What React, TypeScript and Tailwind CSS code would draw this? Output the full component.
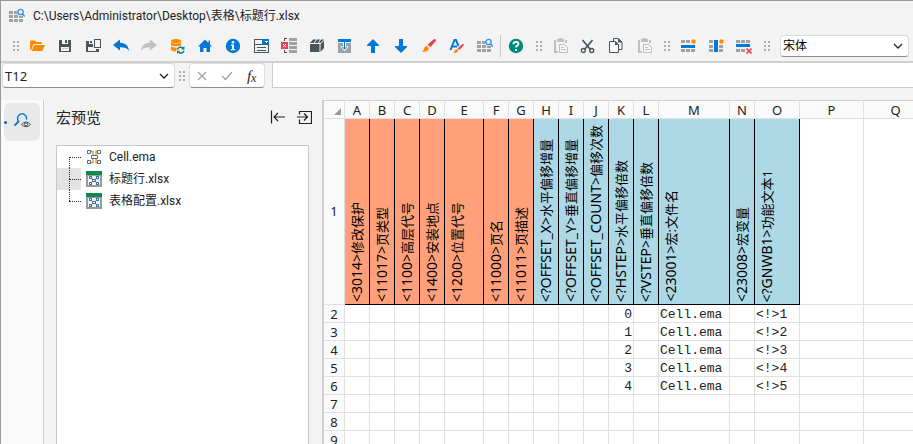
import * as React from "react"
import clsx from "clsx"

const BLUE = "#0078d7"
const DARK = "#4a5459"
const GRAY = "#9ea2a2"
const PALE = "#c0c0c0"
const ORANGE = "#fb8c00"
const RED = "#e8414f"
const GREEN = "#00897b"

interface IconProps {
  children: React.ReactNode
  crisp?: boolean
}

function Icon({ children, crisp = false }: IconProps) {
  return (
    <svg
      width="16"
      height="16"
      viewBox="0 0 16 16"
      fill="none"
      aria-hidden="true"
      shapeRendering={crisp ? "crispEdges" : undefined}
      className="shrink-0"
    >
      {children}
    </svg>
  )
}

function FolderIcon() {
  return (
    <Icon>
      <path d="M1 12V3.5Q1 2.5 2 2.5H6L7.5 4H12.5V6H4.5L2.2 12Z" fill={ORANGE} />
      <path d="M5.2 7H16L13.4 13H2.6Z" fill={ORANGE} />
    </Icon>
  )
}

function SaveIcon() {
  return (
    <Icon crisp>
      <path d="M2 2H5V6H11V2H13L14 3V14H2Z" fill={DARK} />
      <path d="M8 2H10V5H8Z" fill={DARK} />
      <path d="M4 9H12V13H4Z" fill="#f3f3f3" />
      <path d="M5 10H11V11H5Z" fill="#c6c9cb" />
    </Icon>
  )
}

function SaveAsIcon() {
  return (
    <Icon crisp>
      <path d="M1 3H4V6H8V11H14V14H1Z" fill={DARK} />
      <path d="M5 3H7V5H5Z" fill={DARK} />
      <path d="M3 9H8V13H3ZM8 11H11V13H8Z" fill="#f3f3f3" />
      <path d="M9.5 1.5H15.5V9.5H9.5Z" stroke={DARK} />
    </Icon>
  )
}

function UndoIcon() {
  return (
    <Icon>
      <path d="M0 7L7 1.5V4.8C12 4.8 15.5 7.5 16 13C14 10 11.5 9.3 7 9.3V12.5Z" fill={BLUE} />
    </Icon>
  )
}

function RedoIcon() {
  return (
    <Icon>
      <path d="M16 7L9 1.5V4.8C4 4.8 .5 7.5 0 13C2 10 4.5 9.3 9 9.3V12.5Z" fill={PALE} />
    </Icon>
  )
}

function DatabaseIcon() {
  return (
    <Icon>
      <ellipse cx="7" cy="3" rx="5" ry="2" fill={ORANGE} />
      <path d="M2 4.3Q7 7 12 4.3V7.5Q7 9 2 7.5Z" fill={ORANGE} />
      <path d="M2 8.6Q5 10 8 9.7L7 13.5Q3.5 13.5 2 12Z" fill={ORANGE} />
      <path d="M8.5 11.5A3.2 3.2 0 0 1 14 10.3M15 12.8A3.2 3.2 0 0 1 9.5 14" stroke={GREEN} strokeWidth="1.5" />
      <path d="M15.5 8V11.5H12ZM8 16V12.7H11.3Z" fill={GREEN} />
    </Icon>
  )
}

function HomeIcon() {
  return (
    <Icon>
      <path d="M8 1.5L11.5 5V2.5H13V6.5L15 8.5H13V14H9.5V10H6.5V14H3V8.5H1Z" fill={BLUE} />
    </Icon>
  )
}

function InfoIcon() {
  return (
    <Icon>
      <circle cx="8" cy="8" r="7.2" fill={BLUE} />
      <circle cx="8" cy="4.3" r="1.3" fill="#fff" />
      <path d="M6 6.5H9V11H10.3V12.3H5.8V11H7V7.7H6Z" fill="#fff" />
    </Icon>
  )
}

function FormIcon() {
  return (
    <Icon crisp>
      <path d="M1 1H9V2H2V14H15V7H16V15H1Z" fill={DARK} />
      <path d="M9 1H16V6H9Z" fill={BLUE} />
      <path d="M11 3H15L13 5Z" fill="#fff" />
      <path d="M1 6H16V7H1ZM4 9H13V10H4ZM4 12H13V13H4Z" fill={DARK} />
    </Icon>
  )
}

function RemoveRowsIcon() {
  return (
    <Icon crisp>
      <path d="M8 0H16V3H8ZM8 4H16V7H8ZM8 8H16V11H8ZM8 12H16V15H8Z" fill={GRAY} />
      <path d="M3 3V0H6V1H4V3ZM3 12V15H6V14H4V12Z" fill={DARK} />
      <path d="M0 4H7V11H0Z" fill={RED} />
      <path d="M2 6L5 9M5 6L2 9" stroke="#fff" shapeRendering="auto" />
    </Icon>
  )
}

function BoxIcon() {
  return (
    <Icon>
      <path d="M1 6H10.5V14H1Z" fill={DARK} />
      <path d="M4 1.5H7L4.8 5H1ZM8 1.5H11L9 5H5.8ZM12 1.5H15L11.5 5H10ZM11.5 6.2L15 2.5V10L11.5 14Z" fill={DARK} />
    </Icon>
  )
}

function ImportIcon() {
  return (
    <Icon>
      <path d="M1 1H14V4H1Z" fill={BLUE} />
      <path d="M1 5H14V15H1Z" fill={GRAY} />
      <path d="M6 4H9V8.5H11.8L7.5 13L3.2 8.5H6Z" fill="#fff" />
      <path d="M7.5 3V11M5.5 9L7.5 11.2L9.5 9" stroke={BLUE} />
    </Icon>
  )
}

function UpIcon() {
  return (
    <Icon>
      <path d="M8 1L14 7V8H10V15H6V8H2V7Z" fill={BLUE} />
    </Icon>
  )
}

function DownIcon() {
  return (
    <Icon>
      <path d="M8 15L14 9V8H10V1H6V8H2V9Z" fill={BLUE} />
    </Icon>
  )
}

function BrushIcon() {
  return (
    <Icon>
      <path d="M12.5 1.5Q14.5 .5 15 2Q15 3 14 4L9.5 9L6.5 6.8Z" fill={RED} />
      <path d="M5.5 8Q8 8.5 7.8 11Q7 14 1 14Q3 12.5 3 10.5Q3.5 8 5.5 8Z" fill={ORANGE} />
    </Icon>
  )
}

function FormatBrushIcon() {
  return (
    <Icon>
      <path d="M1.5 12L5.5 2H7L9.5 8M3.2 8.5H8" stroke={BLUE} strokeWidth="2" />
      <path d="M13.500 6Q15 5.500 15 7L10.500 12L8.500 10.500Z" fill={RED} />
      <path d="M7.5 11Q9.5 11.5 9.3 13Q8 15.5 4 15Q5.5 14 5.7 12.5Q6.3 11 7.5 11Z" fill={ORANGE} />
    </Icon>
  )
}

function GridSearchIcon() {
  return (
    <Icon>
      <path d="M0 3H4V6H0ZM5 3H8V6H5ZM0 7H4V10H0ZM5 7H9V10H5ZM10 8H14V10H10ZM0 11H4V14H0ZM5 11H9V14H5ZM10 11H14V14H10Z" fill={GRAY} shapeRendering="crispEdges" />
      <circle cx="11.5" cy="4" r="2.7" stroke="#3393df" strokeWidth="1.3" fill="#e5f1fb" />
      <path d="M13.3 6L15.8 8.5" stroke="#3393df" strokeWidth="1.6" />
    </Icon>
  )
}

function HelpIcon() {
  return (
    <Icon>
      <circle cx="8" cy="8" r="7.2" fill={GREEN} />
      <path d="M5.5 6.2Q5.5 3.8 8 3.8Q10.5 3.8 10.5 5.8Q10.5 7 9 7.8Q8 8.4 8 9.6" stroke="#fff" strokeWidth="1.8" />
      <path d="M7 11H9V13H7Z" fill="#fff" />
    </Icon>
  )
}

function PasteIcon() {
  return (
    <Icon crisp>
      <path d="M2 2H4V13H6V15H2ZM5 1H7V0H10V1H12V4H5ZM13 2H15V5H13Z" fill={PALE} />
      <path d="M7.5 6.5H12.5L15.5 9.5V14.5H7.5Z" stroke={PALE} fill="#f7f7f7" />
      <path d="M9 9.5H12M9 11.5H14" stroke={PALE} />
    </Icon>
  )
}

function ScissorsIcon() {
  return (
    <Icon>
      <path d="M2.5 2L10.5 11.5M12.5 2L4.5 11.5" stroke={DARK} strokeWidth="1.7" />
      <circle cx="3.3" cy="12.5" r="2" stroke={DARK} strokeWidth="1.3" />
      <circle cx="11.7" cy="12.5" r="2" stroke={DARK} strokeWidth="1.3" />
    </Icon>
  )
}

function CopyIcon() {
  return (
    <Icon>
      <path d="M5.5 3.5V.5H10.5L14 4V11.5H10.5" stroke={DARK} />
      <path d="M1.5 3.5H7.5L10.5 6.5V14.5H1.5Z" stroke={DARK} fill="#f7f7f7" />
      <path d="M7 3.5V7H10.5ZM10 .5V4.5H14Z" fill={DARK} />
    </Icon>
  )
}

function InsertRowIcon() {
  return (
    <Icon crisp>
      <path d="M1 2H5V5H1ZM6 2H10V5H6ZM1 11H5V14H1ZM6 11H10V14H6ZM11 11H15V14H11Z" fill={GRAY} />
      <path d="M1 7H15V10H1Z" fill={BLUE} />
      <circle cx="13.5" cy="3.5" r="2.2" fill={ORANGE} shapeRendering="auto" />
    </Icon>
  )
}

function InsertColumnIcon() {
  return (
    <Icon crisp>
      <path d="M1 2H5V5H1ZM1 7H5V10H1ZM1 11H5V14H1ZM11 7H15V10H11ZM11 11H15V14H11Z" fill={GRAY} />
      <path d="M6 2H10V14H6Z" fill={BLUE} />
      <circle cx="13.5" cy="3.5" r="2.2" fill={ORANGE} shapeRendering="auto" />
    </Icon>
  )
}

function DeleteRowIcon() {
  return (
    <Icon crisp>
      <path d="M0 2H4V5H0ZM5 2H9V5H5ZM10 2H14V5H10ZM0 11H4V14H0ZM5 11H9V14H5Z" fill={GRAY} />
      <path d="M0 6H14V9H0Z" fill={BLUE} />
      <path d="M10.5 10.5L15.5 15.5M15.5 10.5L10.5 15.5" stroke={RED} strokeWidth="1.6" shapeRendering="auto" />
    </Icon>
  )
}

function MacroIcon() {
  return (
    <Icon>
      <path d="M5 2.5H7V6M10 6V2.5H12M5 13.5H7V10M10 10V13.5H12" stroke={ORANGE} strokeWidth="1.3" />
      <path d="M1.5 1.5H4.5V4.5H1.5ZM11.5 1.5H14.5V4.5H11.5ZM1.5 11.5H4.5V14.5H1.5ZM11.5 11.5H14.5V14.5H11.5ZM5.5 6.5H11.5V9.5H5.5Z" stroke="#3d72a4" fill="#fff" />
    </Icon>
  )
}

function WorkbookIcon() {
  return (
    <Icon crisp>
      <path d="M1 4H15V15H1Z" stroke="#9a9a9a" strokeWidth="2" fill="#f5f5f5" />
      <path d="M0 0H16V4H0Z" fill="#0b8a4b" />
      <path d="M4 6L12 13M12 6L4 13" stroke={ORANGE} shapeRendering="auto" />
      <path d="M3 5H6V8H3ZM10 5H13V8H10ZM3 11H6V14H3ZM10 11H13V14H10ZM6 8H10V11H6Z" fill="#3d72a4" />
      <path d="M4 6H5V7H4ZM11 6H12V7H11ZM4 12H5V13H4ZM11 12H12V13H11ZM7 9H9V10H7Z" fill="#fff" />
    </Icon>
  )
}

function Chevron() {
  return (
    <svg width="10" height="6" viewBox="0 0 10 6" fill="none" aria-hidden="true" className="pointer-events-none absolute right-[6px] top-1/2 -translate-y-1/2">
      <path d="M1 1L5 5L9 1" stroke="#222" strokeWidth="1.3" />
    </svg>
  )
}

function Grip({ className }: { className?: string }) {
  return (
    <div className={clsx("shrink-0", className)}>
      <svg width="6" height="10" viewBox="0 0 6 10" aria-hidden="true" shapeRendering="crispEdges">
        <path d="M0 0H2V2H0ZM4 0H6V2H4ZM0 4H2V6H0ZM4 4H6V6H4ZM0 8H2V10H0ZM4 8H6V10H4Z" fill="#adadad" />
      </svg>
    </div>
  )
}

interface Tool {
  label: string
  icon: React.ComponentType
  disabled?: boolean
}

const mainTools: Tool[] = [
  { label: "打开", icon: FolderIcon },
  { label: "保存", icon: SaveIcon },
  { label: "另存为", icon: SaveAsIcon },
  { label: "撤销", icon: UndoIcon },
  { label: "恢复", icon: RedoIcon, disabled: true },
  { label: "更新数据", icon: DatabaseIcon },
  { label: "主页", icon: HomeIcon },
  { label: "信息", icon: InfoIcon },
  { label: "表单", icon: FormIcon },
  { label: "移除", icon: RemoveRowsIcon },
  { label: "打包", icon: BoxIcon },
  { label: "导入", icon: ImportIcon },
  { label: "上移", icon: UpIcon },
  { label: "下移", icon: DownIcon },
  { label: "画笔", icon: BrushIcon },
  { label: "格式刷", icon: FormatBrushIcon },
  { label: "查看表格", icon: GridSearchIcon },
]

const helpTools: Tool[] = [{ label: "帮助", icon: HelpIcon }]

const clipboardTools: Tool[] = [
  { label: "粘贴", icon: PasteIcon, disabled: true },
  { label: "剪切", icon: ScissorsIcon },
  { label: "复制", icon: CopyIcon },
  { label: "选择性粘贴", icon: PasteIcon, disabled: true },
]

const tableTools: Tool[] = [
  { label: "插入行", icon: InsertRowIcon },
  { label: "插入列", icon: InsertColumnIcon },
  { label: "删除行", icon: DeleteRowIcon },
]

function ToolGroup({ tools }: { tools: Tool[] }) {
  return (
    <div className="flex shrink-0">
      {tools.map(({ label, icon: ToolIcon, disabled }) => (
        <button
          key={label}
          type="button"
          aria-label={label}
          disabled={disabled}
          className="flex h-7 w-7 items-center justify-center rounded hover:bg-black/5"
        >
          <ToolIcon />
        </button>
      ))}
    </div>
  )
}

function Toolbar() {
  return (
    <div className="flex h-[33px] shrink-0 items-center border-b-2 border-[#d0d0d0] pl-1.5 pr-1">
      <Grip className="w-4 pl-1.5" />
      <ToolGroup tools={mainTools} />
      <div className="mx-px h-[22px] w-px shrink-0 bg-[#c8c8c8]" />
      <ToolGroup tools={helpTools} />
      <Grip className="w-4 pl-1.5" />
      <ToolGroup tools={clipboardTools} />
      <Grip className="w-4 pl-1.5" />
      <ToolGroup tools={tableTools} />
      <Grip className="w-4 pl-1.5" />
      <div className="relative ml-1.5 min-w-0 flex-1">
        <select
          aria-label="字体"
          className="block h-[22px] w-full appearance-none rounded-[4px] border border-[#dcdcdc] border-b-[#8c8c8c] bg-white px-0.5 text-xs leading-4 text-black"
        >
          <option>宋体</option>
        </select>
        <Chevron />
      </div>
    </div>
  )
}

function FormulaBar() {
  return (
    <div className="mb-3 flex h-[25px] shrink-0 items-stretch pl-px">
      <div className="relative w-[173px] shrink-0">
        <select
          aria-label="名称框"
          className="block h-full w-full appearance-none rounded-[4px] border border-[#dcdcdc] border-b-[#8c8c8c] bg-white px-0.5 text-[13px] leading-4 text-[#222]"
        >
          <option>T12</option>
        </select>
        <Chevron />
      </div>
      <Grip className="flex w-3.5 items-center pl-1" />
      <div className="flex w-[76px] shrink-0 items-center rounded-[4px] border border-[#dcdcdc] border-b-[#8c8c8c] bg-white">
        <button type="button" aria-label="取消" disabled className="flex h-full flex-1 items-center justify-center">
          <svg width="10" height="10" viewBox="0 0 10 10" fill="none" aria-hidden="true">
            <path d="M1 1L9 9M9 1L1 9" stroke="#a0a0a0" strokeWidth="1.2" />
          </svg>
        </button>
        <button type="button" aria-label="输入" disabled className="flex h-full flex-1 items-center justify-center">
          <svg width="12" height="10" viewBox="0 0 12 10" fill="none" aria-hidden="true">
            <path d="M1 5L4.5 8.5L11 1" stroke="#a0a0a0" strokeWidth="1.2" />
          </svg>
        </button>
        <button type="button" aria-label="插入函数" className="flex h-full flex-1 items-center justify-center font-['Liberation_Serif',serif] text-[15px] italic leading-4 text-[#222]">
          f<span className="pt-1 text-xs">x</span>
        </button>
      </div>
      <input
        aria-label="编辑栏"
        className="ml-[7px] min-w-0 flex-1 border-b border-l border-[#cccccc] bg-white px-1 text-[13px] outline-none"
      />
    </div>
  )
}

const files = [
  { name: "Cell.ema", icon: MacroIcon },
  { name: "标题行.xlsx", icon: WorkbookIcon, selected: true },
  { name: "表格配置.xlsx", icon: WorkbookIcon },
]

function MacroPanel() {
  return (
    <aside className="flex w-[278px] shrink-0 flex-col pl-3 pr-[13px]">
      <div className="flex h-[45px] items-center pb-3">
        <h2 className="flex-1 text-[15px] leading-5 text-[#222]">宏预览</h2>
        <button type="button" aria-label="停靠" className="mr-[10px]">
          <Icon>
            <path d="M1.5 1.5V14.5M15 8H4M8 4L4 8L8 12" stroke="#222" strokeWidth="1.2" />
          </Icon>
        </button>
        <button type="button" aria-label="移出" className="-mr-[3px]">
          <Icon>
            <path d="M3.5 5.5V2.5H15.5V14.5H3.5V10.5M1 8H11M8 4.5L11.5 8L8 11.5" stroke="#222" strokeWidth="1.2" />
          </Icon>
        </button>
      </div>
      <ul className="flex-1 border border-b-0 border-[#c8c8c8] bg-white font-['Roboto','Noto_Sans_CJK_SC',sans-serif] text-xs leading-[22px] text-[#222]">
        {files.map(({ name, icon: FileIcon, selected }, i) => (
          <li key={name} className="flex h-[22px] items-center">
            <div className={clsx("flex h-full w-6 flex-col pl-3", selected && "bg-[#e3e3e3]")}>
              <div className={clsx("h-[11px]", i > 0 && "border-l border-dotted border-[#333]")} />
              <div className={clsx("h-[11px] border-t border-dotted border-[#333]", i < files.length - 1 && "border-l")} />
            </div>
            <div className="pl-[5px] pr-[7px]">
              <FileIcon />
            </div>
            {name}
          </li>
        ))}
      </ul>
    </aside>
  )
}

interface Column {
  id: string
  width: string
  fill?: "orange" | "blue"
  code?: string
  title?: string
}

const columns: Column[] = [
  { id: "A", width: "w-[25px]", fill: "orange", code: "<3014>", title: "修改保护" },
  { id: "B", width: "w-[25px]", fill: "orange", code: "<11017>", title: "页类型" },
  { id: "C", width: "w-[25px]", fill: "orange", code: "<1100>", title: "高层代号" },
  { id: "D", width: "w-[25px]", fill: "orange", code: "<1400>", title: "安装地点" },
  { id: "E", width: "w-[39px]", fill: "orange", code: "<1200>", title: "位置代号" },
  { id: "F", width: "w-[25px]", fill: "orange", code: "<11000>", title: "页名" },
  { id: "G", width: "w-[25px]", fill: "orange", code: "<11011>", title: "页描述" },
  { id: "H", width: "w-[25px]", fill: "blue", code: "<?OFFSET_X>", title: "水平偏移增量" },
  { id: "I", width: "w-[25px]", fill: "blue", code: "<?OFFSET_Y>", title: "垂直偏移增量" },
  { id: "J", width: "w-[25px]", fill: "blue", code: "<?OFFSET_COUNT>", title: "偏移次数" },
  { id: "K", width: "w-[25px]", fill: "blue", code: "<?HSTEP>", title: "水平偏移倍数" },
  { id: "L", width: "w-[25px]", fill: "blue", code: "<?VSTEP>", title: "垂直偏移倍数" },
  { id: "M", width: "w-[71px]", fill: "blue", code: "<23001>", title: "宏:文件名" },
  { id: "N", width: "w-[25px]", fill: "blue", code: "<23008>", title: "宏变量" },
  { id: "O", width: "w-[45px]", fill: "blue", code: "<?GNWB1>", title: "功能文本1" },
  { id: "P", width: "w-[64px]" },
  { id: "Q", width: "w-[64px]" },
]

const rows: Record<string, string>[] = [
  { K: "0", M: "Cell.ema", O: "<!>1" },
  { K: "1", M: "Cell.ema", O: "<!>2" },
  { K: "2", M: "Cell.ema", O: "<!>3" },
  { K: "3", M: "Cell.ema", O: "<!>4" },
  { K: "4", M: "Cell.ema", O: "<!>5" },
  {},
  {},
  {},
]

function Sheet() {
  return (
    <main className="min-w-0 flex-1 overflow-hidden border-l-2 border-t border-[#cfcfcf] bg-white">
      <table className="w-[604px] table-fixed border-separate border-spacing-0">
        <colgroup>
          <col className="w-[21px]" />
          {columns.map((col) => (
            <col key={col.id} className={col.width} />
          ))}
        </colgroup>
        <thead>
          <tr className="h-[18px] bg-[#fafafa] text-[13px] leading-4 text-[#222]">
            <th className="border-b border-r border-[#e0e0e0] p-0 align-bottom">
              <svg width="7" height="7" viewBox="0 0 7 7" aria-hidden="true" className="mb-[3px] ml-auto mr-[3px]">
                <path d="M7 0V7H0Z" fill="#9a9a9a" />
              </svg>
            </th>
            {columns.map((col) => (
              <th key={col.id} scope="col" className="border-b border-r border-[#e0e0e0] p-0 font-normal">
                {col.id}
              </th>
            ))}
          </tr>
        </thead>
        <tbody>
          <tr className="h-[186px]">
            <th scope="row" className="border-b border-r border-[#e0e0e0] bg-[#fafafa] p-0 text-[13px] font-normal text-[#222]">
              1
            </th>
            {columns.map((col) => (
              <td
                key={col.id}
                className={clsx(
                  "border-b border-r p-0 pb-0.5 pl-1 align-bottom",
                  col.fill === "orange" && "border-black bg-[#ffa07a]",
                  col.fill === "blue" && "border-black bg-[#add8e6]",
                  !col.fill && "border-[#e0e0e0]"
                )}
              >
                {col.code && (
                  <div className="w-4 rotate-180 whitespace-nowrap text-sm leading-4 text-black [text-orientation:sideways] [writing-mode:vertical-rl]">
                    {col.code}
                    <span className="text-[13px]">{col.title}</span>
                  </div>
                )}
              </td>
            ))}
          </tr>
          {rows.map((row, i) => (
            <tr key={i} className="h-[18px]">
              <th scope="row" className="border-b border-r border-[#e0e0e0] bg-[#fafafa] p-0 text-[13px] font-normal leading-4 text-[#222]">
                {i + 2}
              </th>
              {columns.map((col) => (
                <td
                  key={col.id}
                  className={clsx(
                    "whitespace-nowrap border-b border-r border-[#e0e0e0] px-px pb-0 pt-[3px] font-['Liberation_Mono',monospace] text-[13px] leading-[14px] text-[#222]",
                    col.id === "K" && "text-right"
                  )}
                >
                  {row[col.id]}
                </td>
              ))}
            </tr>
          ))}
        </tbody>
      </table>
    </main>
  )
}

export default function App() {
  return (
    <div className="flex h-screen flex-col overflow-hidden border-l border-t border-[#999999] bg-[#f3f3f3] font-['Noto_Sans','Noto_Sans_CJK_SC',sans-serif]">
      <header className="flex h-[29px] shrink-0 items-center gap-2 pl-2">
        <GridSearchIcon />
        <h1 className="font-['Roboto','Noto_Sans_CJK_SC',sans-serif] text-xs leading-4 text-[#222]">
          C:\Users\Administrator\Desktop\表格\标题行.xlsx
        </h1>
      </header>
      <Toolbar />
      <FormulaBar />
      <div className="flex min-h-0 flex-1">
        <nav className="w-[43px] shrink-0 border-r border-[#cfcfcf] bg-[#fafafa] pl-[3px] pt-[3px]">
          <button type="button" aria-label="宏预览" className="flex h-[38px] w-9 items-center rounded-md bg-[#e9e9e9]">
            <span className="h-[3px] w-[3px] rounded-full bg-[#0067c0]" />
            <svg width="18" height="18" viewBox="0 0 18 18" fill="none" aria-hidden="true" className="ml-[7px]">
              <path d="M4.700 8.300A4.500 4.500 0 1 1 12.400 6.500" stroke={BLUE} strokeWidth="1.4" />
              <path d="M5 8L.5 12.500" stroke={BLUE} strokeWidth="1.8" />
              <path d="M7.500 11.500Q12 6.500 16.500 11.500Q12 16 7.500 11.500Z" stroke={DARK} fill="#e9e9e9" />
              <circle cx="12" cy="11.300" r="1.6" stroke={DARK} />
            </svg>
          </button>
        </nav>
        <MacroPanel />
        <Sheet />
      </div>
    </div>
  )
}
